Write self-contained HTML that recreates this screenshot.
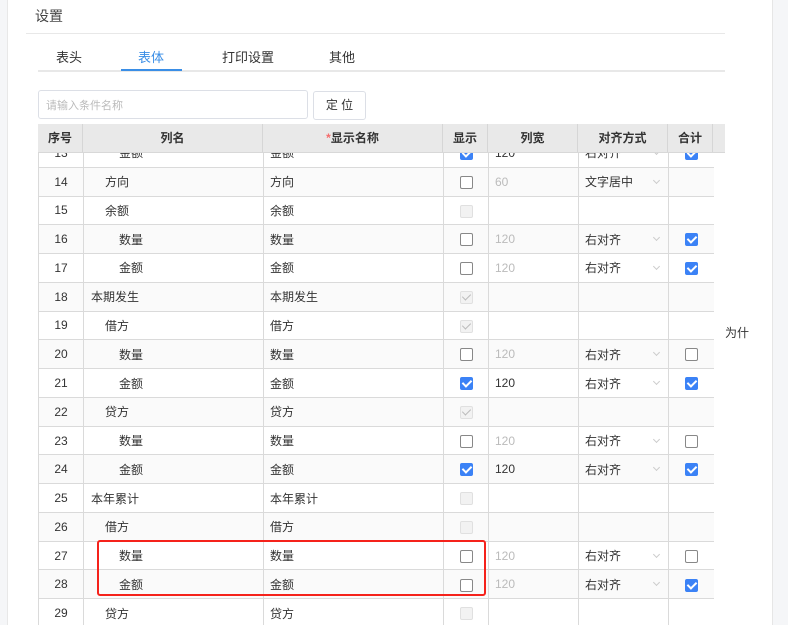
<!DOCTYPE html>
<html><head><meta charset="utf-8"><style>
*{margin:0;padding:0;box-sizing:border-box}
body{width:788px;height:625px;overflow:hidden;background:#fff;font-family:"Liberation Sans","Noto Sans CJK SC",sans-serif;font-size:12px;color:#333;position:relative}
.abs{position:absolute}
.lstrip{left:0;top:0;width:8px;height:625px;background:#f5f6f8;border-right:1px solid #e8e8e8}
.rstrip{left:772px;top:0;width:16px;height:625px;background:#f5f6f8;border-left:1px solid #e6e6e6}
.title{left:35px;top:6px;font-size:14px;color:#444}
.line1{left:26px;top:33px;width:699px;height:1px;background:#e8e8e8}
.tab{top:47px;font-size:13px;color:#333}
.line2{left:38px;top:70px;width:687px;height:2px;background:#e8e8e8}
.uline{left:121px;top:69px;width:61px;height:2px;background:#3a8ee6}
.inp{left:38px;top:90px;width:270px;height:29px;border:1px solid #dcdfe6;border-radius:3px;color:#bbb;font-size:11px;padding:6px 7px}
.btn{left:313px;top:91px;width:53px;height:29px;border:1px solid #dcdfe6;border-radius:3px;text-align:center;line-height:27px;font-size:12px;color:#333}
.hdr{left:38px;top:124px;width:687px;height:29px;background:#e9e9e9;border-bottom:1px solid #d8d8d8}
.hdr div{position:absolute;top:0;height:28px;line-height:28px;text-align:center;font-weight:bold;color:#333;border-right:1px solid #d6d6d6}
.body{left:38px;top:153px;width:676px;height:472px;overflow:hidden}
table{position:absolute;left:0;top:-15px;border-collapse:collapse;table-layout:fixed;width:676px}
td{height:28.77px;border:1px solid #dadada;padding:0 6px;white-space:nowrap;overflow:hidden}
tr:nth-child(even) td{background:#fafafa}
td.n{text-align:center}
.cb{display:inline-block;width:13px;height:13px;border:1px solid #888;border-radius:2px;vertical-align:middle;background:#fff;position:relative}
.cb.on{background:#3b82f6;border-color:#3b82f6}
.cb.on:after,.cb.dc:after{content:"";position:absolute;left:3px;top:0px;width:4px;height:7px;border:solid #fff;border-width:0 2px 2px 0;transform:rotate(45deg)}
.cb.dis{border-color:#e0e0e0;background:#f2f2f2}
.cb.dc{border-color:#e0e0e0;background:#f2f2f2}
.cb.dc:after{border-color:#bbb;border-width:0 1.5px 1.5px 0}
.g{color:#bbb}
.sel{position:relative}
.sel i{position:absolute;right:9px;top:10px;width:5px;height:5px;border:solid #ccc;border-width:0 1px 1px 0;transform:rotate(45deg)}
td.c{text-align:center;padding:0}
.red{left:97px;top:540px;width:389px;height:56px;border:2px solid #f5221b;border-radius:3px}
</style></head><body>
<div class="abs lstrip"></div>
<div class="abs rstrip"></div>
<div class="abs title">设置</div>
<div class="abs line1"></div>
<div class="abs tab" style="left:56px">表头</div>
<div class="abs tab" style="left:138px;color:#3a8ee6">表体</div>
<div class="abs tab" style="left:222px">打印设置</div>
<div class="abs tab" style="left:329px">其他</div>
<div class="abs line2"></div>
<div class="abs uline"></div>
<div class="abs inp">请输入条件名称</div>
<div class="abs btn">定 位</div>
<div class="abs hdr">
<div style="left:0;width:45px">序号</div>
<div style="left:45px;width:180px">列名</div>
<div style="left:225px;width:180px"><span style="color:#f56c6c">*</span>显示名称</div>
<div style="left:405px;width:45px">显示</div>
<div style="left:450px;width:90px">列宽</div>
<div style="left:540px;width:90px">对齐方式</div>
<div style="left:630px;width:45px">合计</div>
</div>
<div class="abs body"><table>
<colgroup><col style="width:45px"><col style="width:180px"><col style="width:180px"><col style="width:45px"><col style="width:90px"><col style="width:90px"><col style="width:46px"></colgroup>
<tr><td class="n">13</td><td style="padding-left:35px">金额</td><td>金额</td><td class="c"><span class="cb on"></span></td><td>120</td><td class="sel">右对齐<i></i></td><td class="c"><span class="cb on"></span></td></tr>
<tr><td class="n">14</td><td style="padding-left:21px">方向</td><td>方向</td><td class="c"><span class="cb"></span></td><td class="g">60</td><td class="sel">文字居中<i></i></td><td></td></tr>
<tr><td class="n">15</td><td style="padding-left:21px">余额</td><td>余额</td><td class="c"><span class="cb dis"></span></td><td></td><td></td><td></td></tr>
<tr><td class="n">16</td><td style="padding-left:35px">数量</td><td>数量</td><td class="c"><span class="cb"></span></td><td class="g">120</td><td class="sel">右对齐<i></i></td><td class="c"><span class="cb on"></span></td></tr>
<tr><td class="n">17</td><td style="padding-left:35px">金额</td><td>金额</td><td class="c"><span class="cb"></span></td><td class="g">120</td><td class="sel">右对齐<i></i></td><td class="c"><span class="cb on"></span></td></tr>
<tr><td class="n">18</td><td style="padding-left:7px">本期发生</td><td>本期发生</td><td class="c"><span class="cb dc"></span></td><td></td><td></td><td></td></tr>
<tr><td class="n">19</td><td style="padding-left:21px">借方</td><td>借方</td><td class="c"><span class="cb dc"></span></td><td></td><td></td><td></td></tr>
<tr><td class="n">20</td><td style="padding-left:35px">数量</td><td>数量</td><td class="c"><span class="cb"></span></td><td class="g">120</td><td class="sel">右对齐<i></i></td><td class="c"><span class="cb"></span></td></tr>
<tr><td class="n">21</td><td style="padding-left:35px">金额</td><td>金额</td><td class="c"><span class="cb on"></span></td><td>120</td><td class="sel">右对齐<i></i></td><td class="c"><span class="cb on"></span></td></tr>
<tr><td class="n">22</td><td style="padding-left:21px">贷方</td><td>贷方</td><td class="c"><span class="cb dc"></span></td><td></td><td></td><td></td></tr>
<tr><td class="n">23</td><td style="padding-left:35px">数量</td><td>数量</td><td class="c"><span class="cb"></span></td><td class="g">120</td><td class="sel">右对齐<i></i></td><td class="c"><span class="cb"></span></td></tr>
<tr><td class="n">24</td><td style="padding-left:35px">金额</td><td>金额</td><td class="c"><span class="cb on"></span></td><td>120</td><td class="sel">右对齐<i></i></td><td class="c"><span class="cb on"></span></td></tr>
<tr><td class="n">25</td><td style="padding-left:7px">本年累计</td><td>本年累计</td><td class="c"><span class="cb dis"></span></td><td></td><td></td><td></td></tr>
<tr><td class="n">26</td><td style="padding-left:21px">借方</td><td>借方</td><td class="c"><span class="cb dis"></span></td><td></td><td></td><td></td></tr>
<tr><td class="n">27</td><td style="padding-left:35px">数量</td><td>数量</td><td class="c"><span class="cb"></span></td><td class="g">120</td><td class="sel">右对齐<i></i></td><td class="c"><span class="cb"></span></td></tr>
<tr><td class="n">28</td><td style="padding-left:35px">金额</td><td>金额</td><td class="c"><span class="cb"></span></td><td class="g">120</td><td class="sel">右对齐<i></i></td><td class="c"><span class="cb on"></span></td></tr>
<tr><td class="n">29</td><td style="padding-left:21px">贷方</td><td>贷方</td><td class="c"><span class="cb dis"></span></td><td></td><td></td><td></td></tr>
</table></div>
<div class="abs red"></div>
<div class="abs" style="left:725px;top:324px;font-size:12px">为什</div>
</body></html>
